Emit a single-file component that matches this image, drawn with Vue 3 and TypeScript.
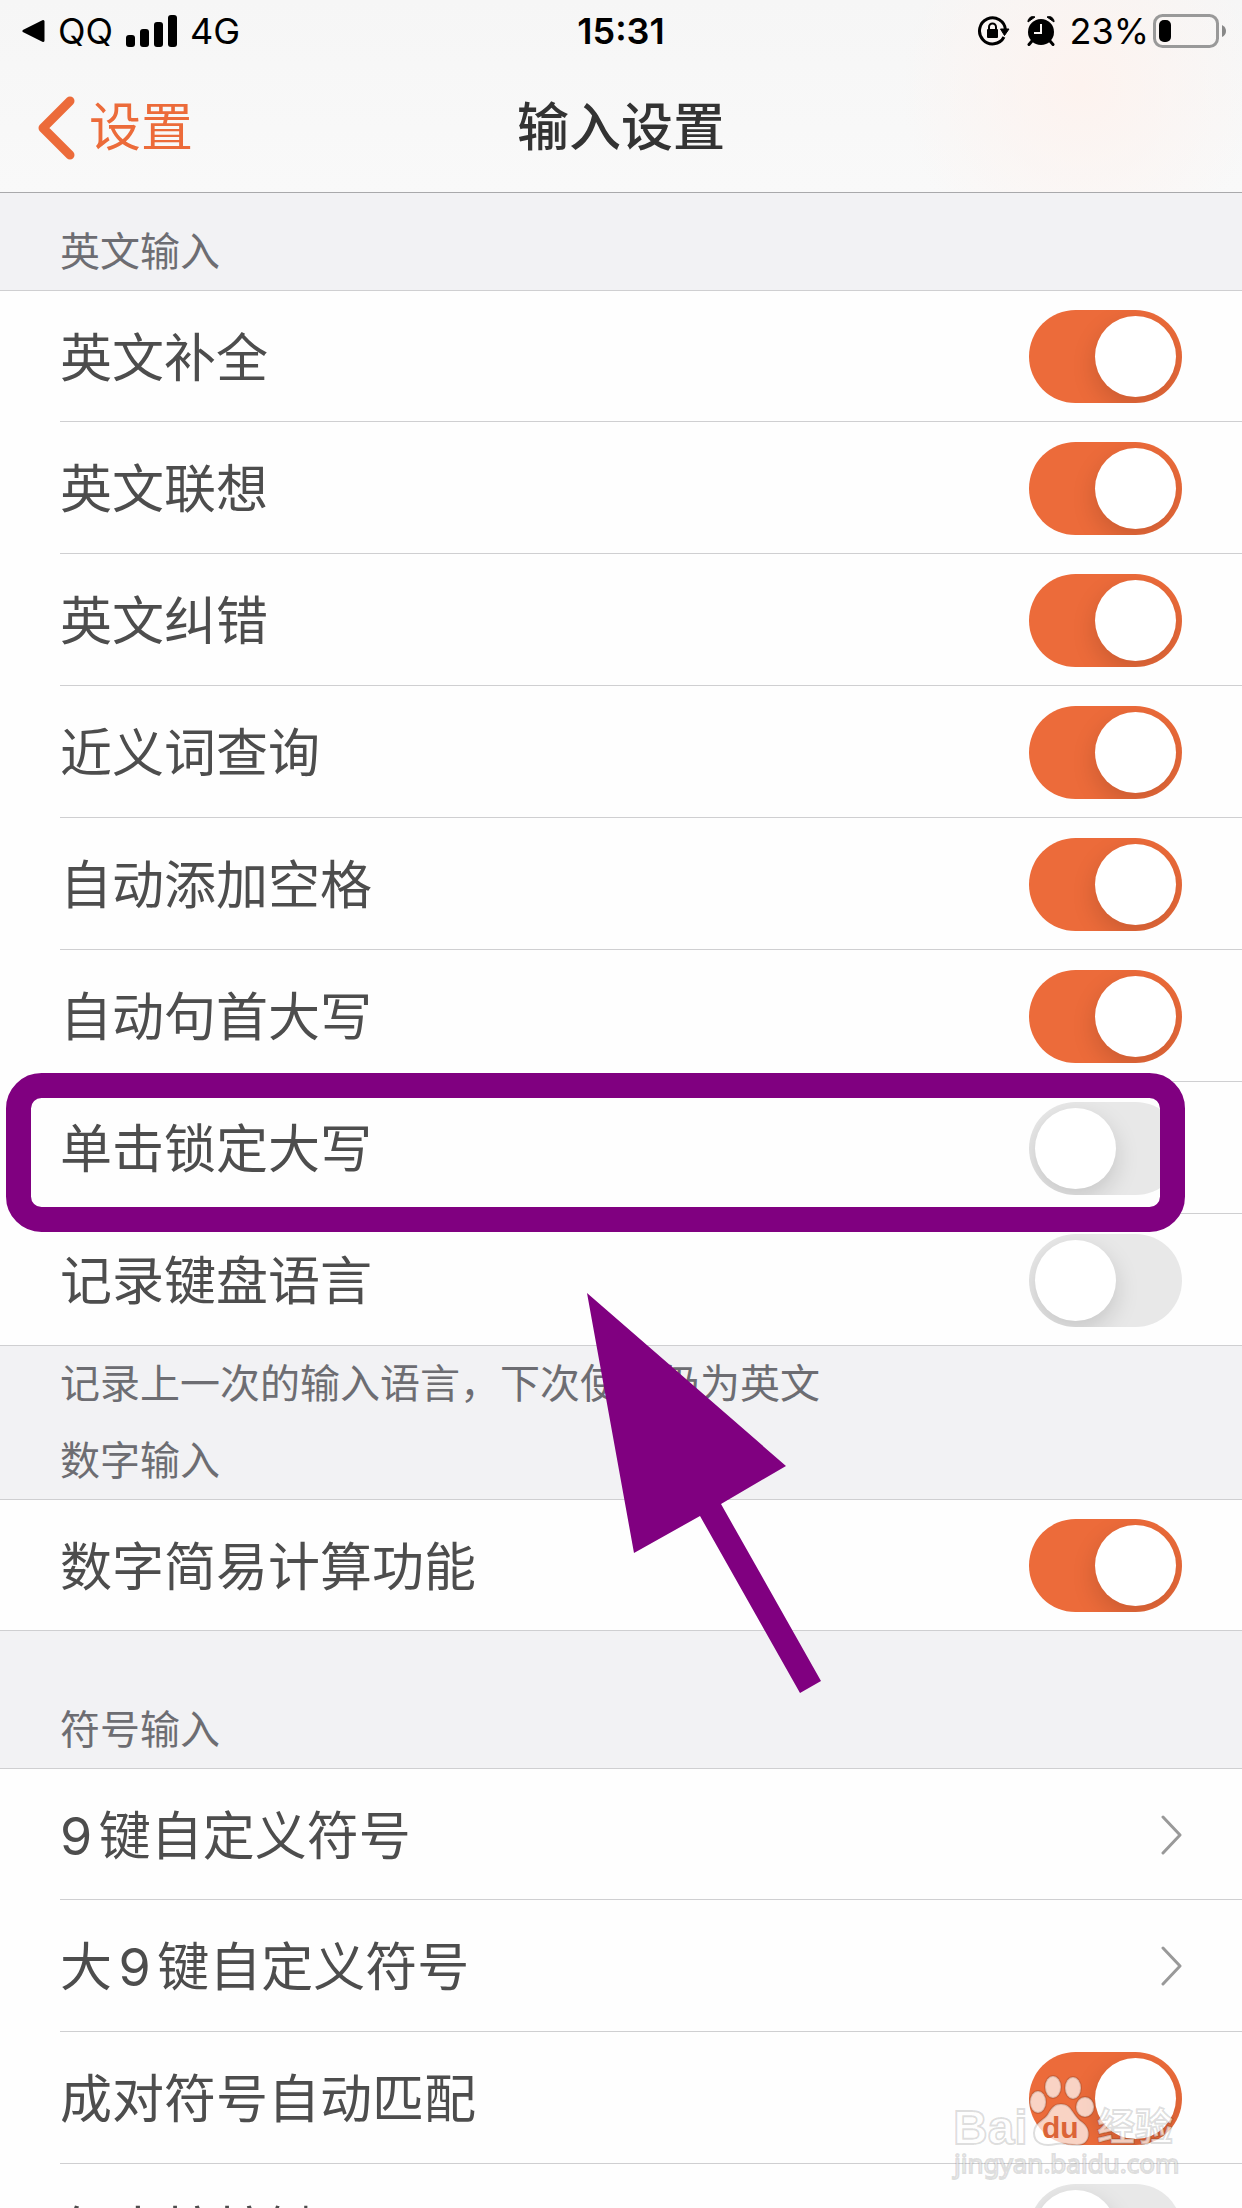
<script setup lang="ts">
import { reactive } from 'vue'

interface Row {
  id: string
  label: string
  kind: 'switch' | 'link'
  on?: boolean
}

interface Section {
  id: string
  title: string
  spaced?: boolean
  rows: Row[]
  note?: string
}

const sections = reactive<Section[]>([
  {
    id: 'english',
    title: '英文输入',
    rows: [
      { id: 'complete', label: '英文补全', kind: 'switch', on: true },
      { id: 'associate', label: '英文联想', kind: 'switch', on: true },
      { id: 'correct', label: '英文纠错', kind: 'switch', on: true },
      { id: 'synonym', label: '近义词查询', kind: 'switch', on: true },
      { id: 'space', label: '自动添加空格', kind: 'switch', on: true },
      { id: 'capital', label: '自动句首大写', kind: 'switch', on: true },
      { id: 'capslock', label: '单击锁定大写', kind: 'switch', on: false },
      { id: 'language', label: '记录键盘语言', kind: 'switch', on: false },
    ],
    note: '记录上一次的输入语言，下次使用仍为英文',
  },
  {
    id: 'number',
    title: '数字输入',
    rows: [{ id: 'calc', label: '数字简易计算功能', kind: 'switch', on: true }],
  },
  {
    id: 'symbol',
    title: '符号输入',
    spaced: true,
    rows: [
      { id: 'nine', label: '9键自定义符号', kind: 'link' },
      { id: 'bignine', label: '大9键自定义符号', kind: 'link' },
      { id: 'pair', label: '成对符号自动匹配', kind: 'switch', on: true },
      { id: 'hold', label: '句中按按键', kind: 'switch', on: false },
    ],
  },
])
</script>

<template>
  <div class="screen">
    <header class="top">
      <div class="status">
        <div class="status-left">
          <svg class="app-return" width="24" height="24" viewBox="0 0 24 24" aria-hidden="true">
            <path d="M2 12 L21 2.500 V21.500 Z" stroke="#000" stroke-width="3" stroke-linejoin="round" />
          </svg>
          <span>QQ</span>
          <svg class="signal" width="51" height="32" viewBox="0 0 51 32" aria-hidden="true">
            <rect x="0" y="20" width="9" height="12" rx="3" />
            <rect x="14" y="14" width="9" height="18" rx="3" />
            <rect x="28" y="7" width="9" height="25" rx="3" />
            <rect x="42" y="0" width="9" height="32" rx="3" />
          </svg>
          <span>4G</span>
        </div>
        <time class="clock">15:31</time>
        <div class="status-right">
          <svg width="34" height="32" viewBox="0 0 34 32" aria-hidden="true">
            <path d="M27 22 A13 13 0 1 1 28.500 15" fill="none" stroke="#000" stroke-width="3" />
            <path d="M23.500 14 H32 L27.500 20.500 Z" stroke="#000" stroke-linejoin="round" />
            <rect x="10" y="14" width="11" height="9" rx="1" />
            <path d="M12 15 V12 A3.500 3.500 0 0 1 19 12 V15" fill="none" stroke="#000" stroke-width="2" />
          </svg>
          <svg class="alarm" width="28" height="30" viewBox="0 0 28 30" aria-hidden="true">
            <circle cx="14" cy="16" r="13" />
            <path d="M1 6 A5 5 0 0 1 8 1 Z M27 6 A5 5 0 0 0 20 1 Z" stroke="#000" stroke-linejoin="round" />
            <path d="M5 25 L2 28.500 M23 25 L26 28.500" stroke="#000" stroke-width="3" stroke-linecap="round" />
            <path d="M14 8 V17 H7" fill="none" stroke="#f9f5f3" stroke-width="2" />
          </svg>
          <span class="percent">23%</span>
          <svg class="battery" width="74" height="34" viewBox="0 0 74 34" aria-hidden="true">
            <rect x="1.500" y="1.500" width="63" height="31" rx="8" fill="none" stroke="#999" stroke-width="3" />
            <rect x="6" y="6" width="12" height="22" rx="5" />
            <path d="M69 11 Q73 13 73 17 Q73 21 69 23 Z" fill="#888" />
          </svg>
        </div>
      </div>
      <nav class="nav">
        <button class="back" type="button">
          <svg width="38" height="64" viewBox="0 0 38 64" aria-hidden="true">
            <path d="M33 5 L6 32 L33 59" fill="none" stroke="#ec6b3a" stroke-width="9" stroke-linecap="round" stroke-linejoin="round" />
          </svg>
          <span>设置</span>
        </button>
        <h1 class="title">输入设置</h1>
      </nav>
    </header>

    <main class="content">
      <section v-for="section in sections" :key="section.id">
        <h2 class="section-title" :class="{ spaced: section.spaced, first: section.id === 'english' }">
          {{ section.title }}
        </h2>
        <ul class="list">
          <li v-for="row in section.rows" :key="row.id" class="item">
            <label v-if="row.kind === 'switch'" class="row" :for="row.id">
              <span class="row-label">{{ row.label }}</span>
              <input :id="row.id" v-model="row.on" class="switch" type="checkbox" role="switch" />
            </label>
            <a v-else class="row" href="#">
              <span class="row-label">{{ row.label }}</span>
              <svg width="22" height="40" viewBox="0 0 22 40" aria-hidden="true">
                <path d="M3 2 L20 20 L3 38" fill="none" stroke="#999" stroke-width="3" stroke-linecap="round" stroke-linejoin="round" />
              </svg>
            </a>
          </li>
        </ul>
        <p v-if="section.note" class="note">{{ section.note }}</p>
      </section>
    </main>

    <svg class="marks" width="1242" height="1720" viewBox="0 0 1242 1720" aria-hidden="true">
      <rect x="18.500" y="1085.500" width="1154" height="134" rx="23" fill="none" stroke="#800080" stroke-width="25" />
      <path d="M587 1293 L786 1466 L721 1504 L821 1681 L800 1693 L700 1516 L634 1553 Z" fill="#800080" />
    </svg>

    <svg class="watermark" width="240" height="120" viewBox="0 0 240 120">
      <g class="ink">
        <text class="brand" x="3" y="76">Bai</text>
        <ellipse cx="103" cy="19" rx="8" ry="11" />
        <ellipse cx="123" cy="20" rx="8" ry="11" />
        <ellipse cx="88" cy="34" rx="8" ry="11" />
        <ellipse cx="135" cy="39" rx="9" ry="10" />
        <path d="M111 36 C122 36 122 47 132 54 C142 61 141 77 127 77 C117 77 114 74 106 76 C93 79 84 75 84 65 C84 54 95 52 98 46 C102 39 105 36 111 36 Z" />
        <text class="brand-cn" x="147" y="72">经验</text>
        <text class="site" x="4" y="105">jingyan.baidu.com</text>
      </g>
      <text class="du" x="92" y="70">du</text>
    </svg>
  </div>
</template>

<style>
body {
  margin: 0;
}
</style>

<style scoped>
.screen {
  position: relative;
  display: flex;
  flex-direction: column;
  height: 100vh;
  overflow: hidden;
  background: #f2f2f4;
  color: #4d4d4d;
  font-family: Inter, 'Noto Sans CJK SC', sans-serif;
  font-size: 52px;
}

.top {
  flex: none;
  border-bottom: 1px solid #a9a9ab;
  background: radial-gradient(circle at 87% 45%, #fdf3ef 0, rgba(253, 243, 239, 0) 180px), linear-gradient(#f6f6f6, #f9f9f9);
}

.status {
  display: grid;
  grid-template-columns: 1fr auto 1fr;
  align-items: center;
  height: 62px;
  padding: 0 15px;
  color: #000;
  font-size: 36px;
  line-height: 62px;
}

.status-left,
.status-right {
  display: flex;
  align-items: center;
}

.status-right {
  justify-content: flex-end;
}

.app-return {
  margin: 0 12px 0 7px;
}

.signal {
  margin: 0 13px;
}

.clock {
  font-weight: 600;
}

.alarm {
  margin-left: 16px;
}

.percent {
  margin: 0 4px 0 14px;
}

.nav {
  display: grid;
  grid-template-columns: 1fr auto 1fr;
  align-items: center;
  box-sizing: border-box;
  height: 130px;
  padding: 2px 37px 0;
}

.back {
  display: flex;
  align-items: center;
  justify-self: start;
  gap: 14px;
  padding: 0;
  border: 0;
  background: none;
  color: #ec6b3a;
  font: inherit;
  line-height: 72px;
}

.title {
  margin: 0;
  color: #333;
  font-size: 52px;
  font-weight: 500;
  line-height: 72px;
}

.content {
  flex: 1;
  min-height: 0;
  overflow-y: auto;
  scrollbar-width: none;
}

.section-title,
.note {
  margin: 0;
  color: #6d6d72;
  font-size: 40px;
  font-weight: 400;
  line-height: 52px;
}

.section-title {
  padding: 25px 60px 12px;
}

.section-title.first {
  padding-top: 33px;
}

.section-title.spaced {
  padding-top: 73px;
}

.note {
  padding: 12px 60px 0;
}

.list {
  margin: 0;
  padding: 0 0 0 60px;
  border-top: 1px solid #cfcfd1;
  border-bottom: 1px solid #cfcfd1;
  background: #fefefe;
  list-style: none;
}

.item + .item {
  border-top: 1px solid #cfcfd1;
}

.row {
  display: flex;
  align-items: center;
  justify-content: space-between;
  box-sizing: border-box;
  height: 131px;
  padding: 1px 60px 0 0;
  color: inherit;
  line-height: 72px;
  text-decoration: none;
  text-autospace: normal;
}

.item:first-child .row {
  height: 130px;
}

.row-label {
  padding-top: 4px;
}

.switch {
  appearance: none;
  flex: none;
  width: 153px;
  height: 93px;
  margin: 0;
  padding: 6px;
  border-radius: 47px;
  overflow: hidden;
  background: #e8e8e8;
}

.switch::before {
  content: '';
  display: block;
  width: 81px;
  height: 81px;
  border-radius: 50%;
  background: #fff;
  box-shadow: 0 9px 24px rgba(0, 0, 0, 0.15);
}

.switch:checked {
  background: #ec6b3a;
}

.switch:checked::before {
  margin-left: 60px;
}

.marks {
  position: absolute;
  top: 0;
  left: 0;
  pointer-events: none;
}

.watermark {
  position: absolute;
  right: 52px;
  bottom: 20px;
  pointer-events: none;
}

.ink {
  fill: rgba(255, 255, 255, 0.7);
  stroke: rgba(0, 0, 0, 0.13);
  stroke-width: 2px;
}

.brand {
  font: 700 48px 'Liberation Sans', sans-serif;
}

.brand-cn {
  font: 700 38px 'Noto Sans CJK SC', sans-serif;
}

.site {
  font: 400 26px 'Noto Sans', sans-serif;
}

.du {
  fill: #dc6437;
  font: 700 30px 'Liberation Sans', sans-serif;
}
</style>
